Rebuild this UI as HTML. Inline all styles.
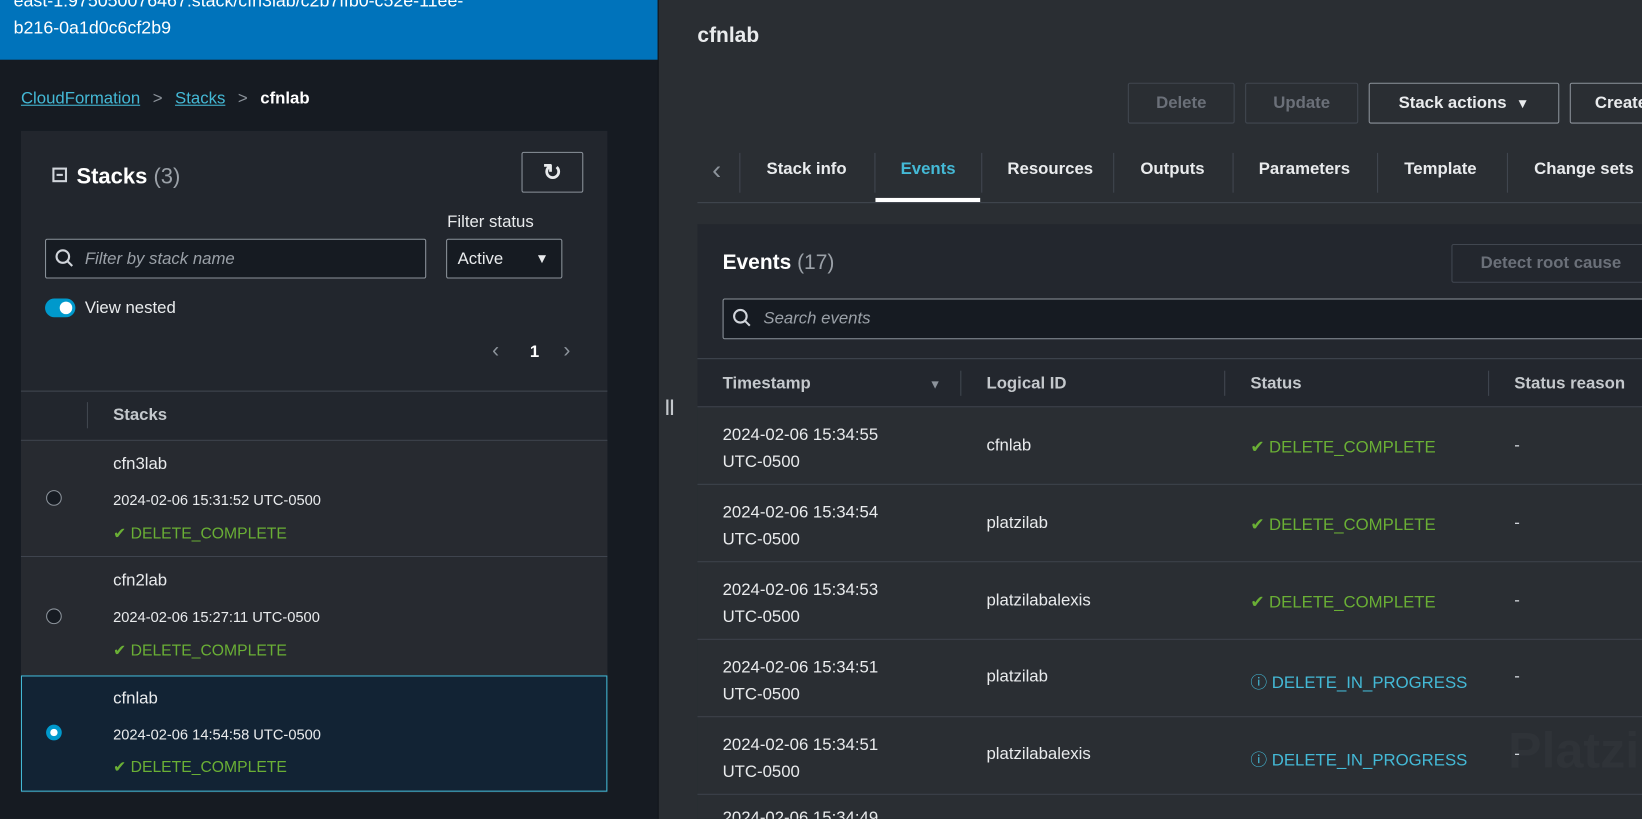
<!DOCTYPE html>
<html><head><meta charset="utf-8"><style>
*{box-sizing:border-box;margin:0;padding:0}
html,body{width:1642px;height:818px;overflow:hidden;background:#2a2e33}
#w{position:absolute;left:0;top:0;width:1568px;height:782px;transform:scale(1.0472);transform-origin:0 0;font-family:"Liberation Sans",sans-serif;color:#d1d5db;font-size:16px;overflow:hidden}
.a{position:absolute}
.left{left:0;top:0;width:628px;height:818px;background:#161b22}
.blue{left:0;top:0;width:628px;height:57px;background:#0073bb;color:#fff;font-size:17px;line-height:26px;padding-left:13px}
.card{left:20px;top:125px;width:560px;height:632px;background:#22262d}
.btn{border:1px solid #8c939b;border-radius:2px;color:#e9ebed;font-weight:bold;display:flex;align-items:center;justify-content:center;font-size:16px}
.dis{border-color:#414750;color:#6b7079}
.inp{border:1px solid #8c939b;background:#161b22;border-radius:2px}
.green{color:#6aaf35}.bl{color:#44b9d6}
.hl{height:1px;background:#414750}
.tab{top:153px;font-weight:bold;color:#e9ebed;font-size:16px}
.vs{width:1px;background:#414750}
</style></head><body><div id="w">
<div class="a left"></div>
<div class="a blue"><div style="margin-top:-12px">east-1:975050076467:stack/cfn3lab/c2b7ffb0-c52e-11ee-</div><div>b216-0a1d0c6cf2b9</div></div>
<div class="a" style="left:20px;top:86px;font-size:16px"><span style="color:#44b9d6;text-decoration:underline">CloudFormation</span><span style="color:#8c939b;margin:0 12px">&gt;</span><span style="color:#44b9d6;text-decoration:underline">Stacks</span><span style="color:#8c939b;margin:0 12px">&gt;</span><b style="color:#fff">cfnlab</b></div>
<div class="a card"></div>
<div class="a" style="left:50px;top:160px;width:14px;height:14px;border:2px solid #d1d5db"></div>
<div class="a" style="left:54px;top:166px;width:6px;height:2px;background:#d1d5db"></div>
<div class="a" style="left:73px;top:157px;font-size:21px;color:#fff"><b>Stacks</b> <span style="color:#9ba1a8">(3)</span></div>
<div class="a btn" style="left:498px;top:145px;width:59px;height:39px;font-size:22px">&#x21bb;</div>
<div class="a" style="left:427px;top:204px;font-size:16px;color:#e9ebed">Filter status</div>
<div class="a inp" style="left:43px;top:228px;width:364px;height:38px"></div>
<svg class="a" style="left:52px;top:237px" width="20" height="20"><circle cx="8" cy="8" r="6" stroke="#d1d5db" stroke-width="2" fill="none"/><path d="M12 12l5 5" stroke="#d1d5db" stroke-width="2"/></svg>
<div class="a" style="left:81px;top:239px;font-style:italic;color:#9ba1a8">Filter by stack name</div>
<div class="a inp" style="left:426px;top:228px;width:111px;height:38px;padding:10px 10px;color:#e9ebed">Active<span style="position:absolute;right:12px;top:10px;font-size:13px">▼</span></div>
<div class="a" style="left:43px;top:285px;width:29px;height:18px;border-radius:9px;background:#0099cc"></div>
<div class="a" style="left:57px;top:288px;width:12px;height:12px;border-radius:6px;background:#fff"></div>
<div class="a" style="left:81px;top:286px;color:#e9ebed">View nested</div>
<div class="a" style="left:470px;top:324px;color:#8c939b;font-size:20px">&#x2039;</div>
<div class="a" style="left:506px;top:328px;color:#fff;font-weight:bold">1</div>
<div class="a" style="left:538px;top:324px;color:#8c939b;font-size:20px">&#x203a;</div>
<div class="a hl" style="left:20px;top:373px;width:560px"></div>
<div class="a vs" style="left:83px;top:384px;height:25px"></div>
<div class="a" style="left:108px;top:388px;font-weight:bold;color:#c4c8cc">Stacks</div>
<div class="a hl" style="left:20px;top:420px;width:560px"></div>
<div class="a" style="left:20px;top:421px;width:560px;height:110px;background:#272a30"></div>
<div class="a hl" style="left:20px;top:531px;width:560px"></div>
<div class="a" style="left:20px;top:532px;width:560px;height:113px;background:#272a30"></div>
<div class="a" style="left:20px;top:645px;width:560px;height:111px;background:#122334;border:1px solid #44b9d6"></div>
<div class="a" style="left:44px;top:468px;width:15px;height:15px;border-radius:50%;border:1.5px solid #8c939b;background:#161b22"></div>
<div class="a" style="left:108px;top:435px;color:#e9ebed">cfn3lab</div>
<div class="a" style="left:108px;top:469px;font-size:14px;color:#e9ebed">2024-02-06 15:31:52 UTC-0500</div>
<div class="a green" style="left:108px;top:500px;font-size:15px">&#x2714;&#xFE0E; DELETE_COMPLETE</div>
<div class="a" style="left:44px;top:581px;width:15px;height:15px;border-radius:50%;border:1.5px solid #8c939b;background:#161b22"></div>
<div class="a" style="left:108px;top:546px;color:#e9ebed">cfn2lab</div>
<div class="a" style="left:108px;top:581px;font-size:14px;color:#e9ebed">2024-02-06 15:27:11 UTC-0500</div>
<div class="a green" style="left:108px;top:612px;font-size:15px">&#x2714;&#xFE0E; DELETE_COMPLETE</div>
<div class="a" style="left:44px;top:692px;width:15px;height:15px;border-radius:50%;background:#0099cc;border:4px solid #0099cc"><div style="width:7px;height:7px;border-radius:50%;background:#fff"></div></div>
<div class="a" style="left:108px;top:659px;color:#e9ebed">cfnlab</div>
<div class="a" style="left:108px;top:693px;font-size:14px;color:#e9ebed">2024-02-06 14:54:58 UTC-0500</div>
<div class="a green" style="left:108px;top:723px;font-size:15px">&#x2714;&#xFE0E; DELETE_COMPLETE</div>
<div class="a" style="left:628px;top:0;width:1px;height:818px;background:#0f1318"></div>
<div class="a" style="left:635px;top:380px;color:#c4c8cc;font-weight:bold">||</div>
<div class="a" style="left:666px;top:23px;font-size:20px;font-weight:bold;color:#e9ebed">cfnlab</div>
<div class="a btn dis" style="left:1077px;top:79px;width:102px;height:39px">Delete</div>
<div class="a btn dis" style="left:1189px;top:79px;width:108px;height:39px">Update</div>
<div class="a btn" style="left:1307px;top:79px;width:182px;height:39px">Stack actions &nbsp;<span style="font-size:13px">▼</span></div>
<div class="a btn" style="left:1499px;top:79px;width:160px;height:39px;justify-content:flex-start;padding-left:23px">Create</div>
<div class="a" style="left:680px;top:148px;color:#8c939b;font-size:26px;line-height:28px">&#x2039;</div>
<div class="a vs" style="left:706px;top:146px;height:38px"></div>
<div class="a tab" style="left:732px">Stack info</div>
<div class="a vs" style="left:835px;top:146px;height:38px"></div>
<div class="a tab" style="left:860px;color:#44b9d6">Events</div>
<div class="a" style="left:836px;top:189px;width:100px;height:4px;background:#fff"></div>
<div class="a vs" style="left:937px;top:146px;height:38px"></div>
<div class="a tab" style="left:962px">Resources</div>
<div class="a vs" style="left:1063px;top:146px;height:38px"></div>
<div class="a tab" style="left:1089px">Outputs</div>
<div class="a vs" style="left:1177px;top:146px;height:38px"></div>
<div class="a tab" style="left:1202px">Parameters</div>
<div class="a vs" style="left:1315px;top:146px;height:38px"></div>
<div class="a tab" style="left:1341px">Template</div>
<div class="a vs" style="left:1439px;top:146px;height:38px"></div>
<div class="a tab" style="left:1465px">Change sets</div>
<div class="a hl" style="left:666px;top:193px;width:976px"></div>
<div class="a" style="left:666px;top:214px;width:976px;height:594px;background:#23272e"></div>
<div class="a" style="left:690px;top:240px;font-size:20px;color:#fff"><b>Events</b> <span style="color:#9ba1a8">(17)</span></div>
<div class="a btn dis" style="left:1386px;top:233px;width:190px;height:37px">Detect root cause</div>
<div class="a inp" style="left:690px;top:285px;width:960px;height:39px"></div>
<svg class="a" style="left:699px;top:294px" width="20" height="20"><circle cx="8" cy="8" r="6" stroke="#d1d5db" stroke-width="2" fill="none"/><path d="M12 12l5 5" stroke="#d1d5db" stroke-width="2"/></svg>
<div class="a" style="left:729px;top:296px;font-style:italic;color:#9ba1a8">Search events</div>
<div class="a hl" style="left:666px;top:342px;width:976px"></div>
<div class="a" style="left:690px;top:358px;font-weight:bold;color:#c4c8cc">Timestamp</div>
<div class="a" style="left:887px;top:360px;color:#8c939b;font-size:12px">▼</div>
<div class="a vs" style="left:917px;top:354px;height:24px"></div>
<div class="a" style="left:942px;top:358px;font-weight:bold;color:#c4c8cc">Logical ID</div>
<div class="a vs" style="left:1169px;top:354px;height:24px"></div>
<div class="a" style="left:1194px;top:358px;font-weight:bold;color:#c4c8cc">Status</div>
<div class="a vs" style="left:1421px;top:354px;height:24px"></div>
<div class="a" style="left:1446px;top:358px;font-weight:bold;color:#c4c8cc">Status reason</div>
<div class="a hl" style="left:666px;top:388px;width:976px"></div>
<div class="a" style="left:666px;top:389px;width:976px;height:73px;background:#2a2e33"></div>
<div class="a" style="left:690px;top:403px;color:#e9ebed;line-height:26px">2024-02-06 15:34:55<br>UTC-0500</div>
<div class="a" style="left:942px;top:417px;color:#e9ebed">cfnlab</div>
<div class="a green" style="left:1194px;top:417px">&#x2714;&#xFE0E; DELETE_COMPLETE</div>
<div class="a" style="left:1446px;top:417px">-</div>
<div class="a hl" style="left:666px;top:462px;width:976px"></div>
<div class="a" style="left:666px;top:463px;width:976px;height:73px;background:#2a2e33"></div>
<div class="a" style="left:690px;top:477px;color:#e9ebed;line-height:26px">2024-02-06 15:34:54<br>UTC-0500</div>
<div class="a" style="left:942px;top:491px;color:#e9ebed">platzilab</div>
<div class="a green" style="left:1194px;top:491px">&#x2714;&#xFE0E; DELETE_COMPLETE</div>
<div class="a" style="left:1446px;top:491px">-</div>
<div class="a hl" style="left:666px;top:536px;width:976px"></div>
<div class="a" style="left:666px;top:537px;width:976px;height:73px;background:#2a2e33"></div>
<div class="a" style="left:690px;top:551px;color:#e9ebed;line-height:26px">2024-02-06 15:34:53<br>UTC-0500</div>
<div class="a" style="left:942px;top:565px;color:#e9ebed">platzilabalexis</div>
<div class="a green" style="left:1194px;top:565px">&#x2714;&#xFE0E; DELETE_COMPLETE</div>
<div class="a" style="left:1446px;top:565px">-</div>
<div class="a hl" style="left:666px;top:610px;width:976px"></div>
<div class="a" style="left:666px;top:611px;width:976px;height:73px;background:#2a2e33"></div>
<div class="a" style="left:690px;top:625px;color:#e9ebed;line-height:26px">2024-02-06 15:34:51<br>UTC-0500</div>
<div class="a" style="left:942px;top:638px;color:#e9ebed">platzilab</div>
<div class="a bl" style="left:1194px;top:638px">&#x24D8; DELETE_IN_PROGRESS</div>
<div class="a" style="left:1446px;top:638px">-</div>
<div class="a hl" style="left:666px;top:684px;width:976px"></div>
<div class="a" style="left:666px;top:685px;width:976px;height:73px;background:#2a2e33"></div>
<div class="a" style="left:1440px;top:690px;font-size:48px;color:#2f3338;font-weight:bold">Platzi</div>
<div class="a" style="left:690px;top:699px;color:#e9ebed;line-height:26px">2024-02-06 15:34:51<br>UTC-0500</div>
<div class="a" style="left:942px;top:712px;color:#e9ebed">platzilabalexis</div>
<div class="a bl" style="left:1194px;top:712px">&#x24D8; DELETE_IN_PROGRESS</div>
<div class="a" style="left:1446px;top:712px">-</div>
<div class="a hl" style="left:666px;top:758px;width:976px"></div>
<div class="a" style="left:666px;top:759px;width:976px;height:59px;background:#2a2e33"></div>
<div class="a" style="left:690px;top:773px;color:#e9ebed">2024-02-06 15:34:49</div>
</div></body></html>
